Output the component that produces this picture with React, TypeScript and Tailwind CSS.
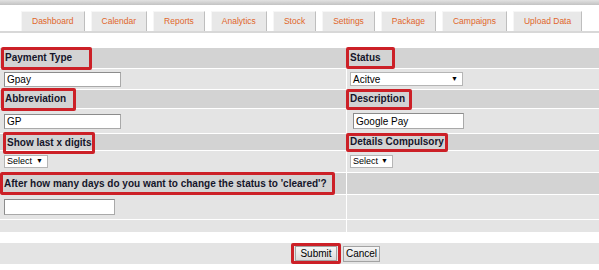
const tabs = ["Dashboard", "Calendar", "Reports", "Analytics", "Stock", "Settings", "Package", "Campaigns", "Upload Data"];

// red annotation box drawn round a field label
function Marked({ label, box }: { label: string; box: string }) {
    return (
        <span className={`relative z-10 flex items-center border-[3px] border-[#cc2027] rounded-[2px] pl-px font-bold text-[10px] leading-none text-[#15152a] whitespace-nowrap ${box}`}>
            {label}
        </span>
    );
}

function TextBox({ value, size }: { value: string; size: string }) {
    return (
        <input
            readOnly
            defaultValue={value}
            className={`bg-white border border-[#a9a9a9] border-t-[#8c8c8c] border-l-[#8c8c8c] px-[2px] text-[10px] text-black outline-none ${size}`}
        />
    );
}

function Picker({ value, size }: { value: string; size: string }) {
    return (
        <div className={`flex items-center justify-between gap-[3px] bg-white border border-[#b5b5b5] pl-[2px] pr-[4px] text-black ${size}`}>
            <span>{value}</span>
            <span className="text-[7px]">▼</span>
        </div>
    );
}

export default function App() {
    return (
        <div className="w-[599px] h-[270px] overflow-hidden bg-white font-['Liberation_Sans',Arial,sans-serif]">
            {/* top shadow */}
            <div className="h-[5px] bg-gradient-to-b from-[#e2e2e2] to-[#c2c2c2]" />

            {/* tabs */}
            <div className="mt-[6px] flex gap-[6px] pl-[21px] border-b-2 border-[#d8d8d8]">
                {tabs.map((t) => (
                    <div
                        key={t}
                        className="h-[20px] px-[10px] flex items-center bg-[#e8e8e8] border-t border-l border-[#f6f6f6] border-r border-r-[#bebebe] text-[8.5px] text-[#e0662a]"
                    >
                        {t}
                    </div>
                ))}
            </div>

            {/* form table */}
            <div className="mt-[15px] grid grid-cols-[346px_252px] grid-rows-[20px_20px_18px_24px_16px_21px_21px_24px_12px] gap-px bg-white">
                <div className="bg-[#d3d3d3] flex items-center pl-px">
                    <Marked label="Payment Type" box="w-[91px] h-[23px]" />
                </div>
                <div className="bg-[#d3d3d3] flex items-center">
                    <Marked label="Status" box="-ml-px w-[49px] h-[22px]" />
                </div>

                <div className="bg-[#e4e4e4] flex items-center pl-[4px]">
                    <TextBox value="Gpay" size="w-[117px] h-[15px]" />
                </div>
                <div className="bg-[#e4e4e4] flex items-center pl-[3px]">
                    <Picker value="Acitve" size="w-[113px] h-[14px] text-[10px]" />
                </div>

                <div className="bg-[#d3d3d3] flex items-center pl-px">
                    <Marked label="Abbreviation" box="w-[75px] h-[23px]" />
                </div>
                <div className="bg-[#d3d3d3] flex items-center">
                    <Marked label="Description" box="-ml-px w-[66px] h-[21px]" />
                </div>

                <div className="bg-[#e4e4e4] flex items-center pl-[4px]">
                    <TextBox value="GP" size="w-[117px] h-[15px]" />
                </div>
                <div className="bg-[#e4e4e4] flex items-center pl-[6px]">
                    <TextBox value="Google Pay" size="w-[111px] h-[16px]" />
                </div>

                <div className="bg-[#d3d3d3] flex items-center pl-[3px]">
                    <Marked label="Show last x digits" box="w-[92px] h-[22px] mt-[2px]" />
                </div>
                <div className="bg-[#d3d3d3] flex items-center">
                    <Marked label="Details Compulsory" box="-ml-px w-[102px] h-[19px]" />
                </div>

                <div className="bg-[#e4e4e4] flex items-center pl-[4px]">
                    <Picker value="Select" size="w-[44px] h-[13px] text-[9px]" />
                </div>
                <div className="bg-[#e4e4e4] flex items-center pl-[3px]">
                    <Picker value="Select" size="w-[43px] h-[13px] text-[9px]" />
                </div>

                <div className="bg-[#d3d3d3] flex items-center">
                    <Marked label="After how many days do you want to change the status to 'cleared'?" box="w-[335px] h-[23px]" />
                </div>
                <div className="bg-[#d3d3d3]" />

                <div className="bg-[#e4e4e4] flex items-center pl-[4px]">
                    <TextBox value="" size="w-[111px] h-[16px]" />
                </div>
                <div className="bg-[#e4e4e4]" />

                <div className="bg-[#e4e4e4]" />
                <div className="bg-[#e4e4e4]" />
            </div>

            {/* actions */}
            <div className="mt-[11px] h-[21px] bg-[#e4e4e4] flex items-center pl-[291px] gap-[2px]">
                <div className="h-[21px] w-[50px] border-[3px] border-[#cc2027] rounded-[2px] flex items-center justify-center">
                    <button className="h-[15px] w-[42px] bg-gradient-to-b from-[#f6f6f6] to-[#dcdcdc] border border-[#a3a3a3] text-[10px] text-black leading-none">
                        Submit
                    </button>
                </div>
                <button className="h-[16px] w-[37px] bg-gradient-to-b from-[#f6f6f6] to-[#dcdcdc] border border-[#a3a3a3] text-[10px] text-black leading-none">
                    Cancel
                </button>
            </div>
        </div>
    );
}
